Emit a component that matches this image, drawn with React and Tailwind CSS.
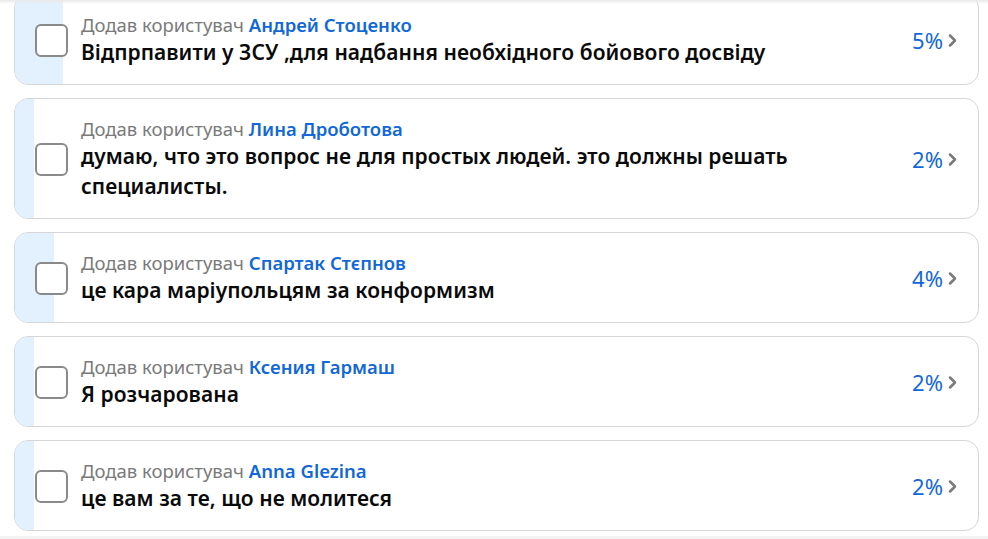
import React from "react";

const items = [
  { name: "Андрей Стоценко", text: "Відпрпавити у ЗСУ ,для надбання необхідного бойового досвіду", pct: 5 },
  { name: "Лина Дроботова", text: "думаю, что это вопрос не для простых людей. это должны решать специалисты.", pct: 2 },
  { name: "Спартак Стєпнов", text: "це кара маріупольцям за конформизм", pct: 4 },
  { name: "Ксения Гармаш", text: "Я розчарована", pct: 2 },
  { name: "Anna Glezina", text: "це вам за те, що не молитеся", pct: 2 },
];

function Card({ name, text, pct }) {
  return (
    <div className="relative flex items-center rounded-[14px] border border-[#d6d6d9] bg-white overflow-hidden">
      <div className="absolute left-0 top-0 bottom-0 bg-[#e3f0fd]" style={{ width: `${pct}%` }} />
      <div className="relative flex items-center w-full pl-[20px] pr-[20px] pt-[18px] pb-[17px]">
        <div className="w-[33px] h-[33px] shrink-0 rounded-[6px] border-2 border-[#8a8a8a] bg-white" />
        <div className="flex-1 ml-[13px] pr-[100px]">
          <div className="text-[18.5px] leading-[24px] text-[#7a7a7a]">
            Додав користувач <span className="text-[#1268d6] font-semibold">{name}</span>
          </div>
          <div className="text-[21px] leading-[30px] font-semibold text-[#0a0a0a] tracking-[0.05px]">{text}</div>
        </div>
        <div className="flex items-center shrink-0">
          <span className="text-[22px] leading-[30px] text-[#1268d6]">{pct}%</span>
          <svg width="11" height="17" viewBox="0 0 11 17" className="ml-[4px] mt-[1px]">
            <path d="M3 3.5 L8 8.5 L3 13.5" fill="none" stroke="#7a7a7a" strokeWidth="2.5" strokeLinecap="round" strokeLinejoin="round" />
          </svg>
        </div>
      </div>
    </div>
  );
}

export default function App() {
  return (
    <div className="relative w-[988px] h-[539px] overflow-hidden bg-white" style={{ fontFamily: '"Noto Sans", "Open Sans", sans-serif' }}>
      <div className="absolute top-0 left-0 right-0 h-[4px] bg-gradient-to-b from-[#e9e9e9] to-transparent z-10" />
      <div className="flex flex-col gap-[13px] pl-[14px] pr-[9px] -mt-[6px]">
        {items.map((it, i) => (
          <Card key={i} {...it} />
        ))}
      </div>
      <div className="absolute left-0 right-0 bottom-0 h-[3px] bg-[#f3f3f3]" />
    </div>
  );
}
